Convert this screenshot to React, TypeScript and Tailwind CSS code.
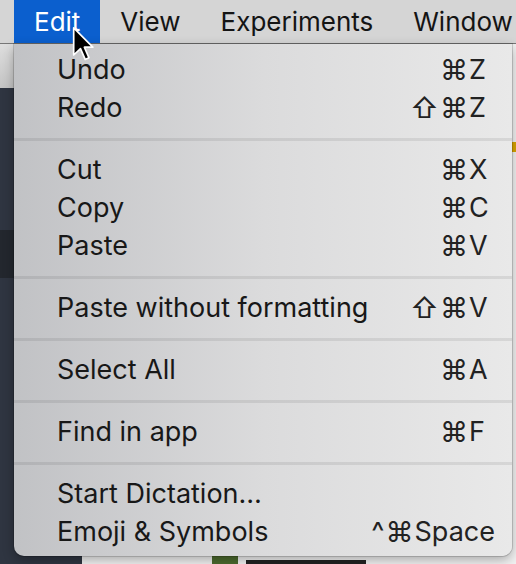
import React from 'react';

type Item = { label: string; mods?: string; keyName?: string; wide?: boolean };

const groups: Item[][] = [
  [
    { label: 'Undo', mods: '⌘', keyName: 'Z' },
    { label: 'Redo', mods: '⇧⌘', keyName: 'Z' },
  ],
  [
    { label: 'Cut', mods: '⌘', keyName: 'X' },
    { label: 'Copy', mods: '⌘', keyName: 'C' },
    { label: 'Paste', mods: '⌘', keyName: 'V' },
  ],
  [{ label: 'Paste without formatting', mods: '⇧⌘', keyName: 'V' }],
  [{ label: 'Select All', mods: '⌘', keyName: 'A' }],
  [{ label: 'Find in app', mods: '⌘', keyName: 'F' }],
  [
    { label: 'Start Dictation…' },
    { label: 'Emoji & Symbols', mods: '^⌘', keyName: 'Space', wide: true },
  ],
];

const topMenus = ['Edit', 'View', 'Experiments', 'Window'];

function Cursor() {
  return (
    <svg
      className="absolute left-[72px] top-[26px] z-30"
      width="22"
      height="36"
      viewBox="-1 -1 13 21"
    >
      <path
        d="M0 0 L0 16 L4 12.2 L6.8 18.6 L9 17.6 L6.3 11.4 L11.3 11.4 Z"
        fill="#000"
        stroke="#fff"
        strokeWidth="1"
        strokeLinejoin="round"
      />
    </svg>
  );
}

function MenuRow({ item }: { item: Item }) {
  return (
    <div className="flex h-[38px] items-center pl-[43px] pr-[25px]">
      <span className="flex-1 whitespace-nowrap text-[#181818]">{item.label}</span>
      {item.keyName && (
        <span className={`flex items-center whitespace-nowrap text-[#222] ${item.wide ? '-mr-[8px]' : ''}`}>
          <span className="text-right text-[28px] leading-none tracking-[1px]">{item.mods}</span>
          <span className={item.wide ? '' : 'w-[18px]'}>{item.keyName}</span>
        </span>
      )}
    </div>
  );
}

export default function App() {
  return (
    <div
      className="relative h-[564px] w-[516px] overflow-hidden bg-[#2e3440] text-[27px]"
      style={{ fontFamily: 'Inter, "Noto Sans", sans-serif' }}
    >
      {/* menu bar */}
      <div className="flex h-[44px] items-stretch overflow-hidden border-b border-[#777] bg-[#d5d5d5] pl-[14px] text-[26px] text-[#141414]">
        {topMenus.map((m, i) => (
          <div
            key={m}
            className={`flex shrink-0 items-center px-[20px] ${i === 0 ? 'bg-[#0b5fce] text-white' : ''}`}
          >
            {m}
          </div>
        ))}
      </div>

      {/* window content behind the menu */}
      <div className="flex h-[520px]">
        <div className="flex w-[82px] flex-col">
          <div className="h-[44px] bg-gradient-to-b from-[#dedede] to-[#c4c4c4]" />
          <div className="h-[142px] bg-[#2f3541]" />
          <div className="h-[48px] bg-[#23272e]" />
          <div className="flex-1 bg-[#2f3541]" />
        </div>
        <div className="flex flex-1 flex-col bg-[#f1f1f1]">
          <div className="h-[98px]" />
          <div className="ml-auto h-[10px] w-[4px] bg-[#d9a400]" />
          <div className="flex-1" />
          <div className="flex h-[10px] items-end gap-[8px] pl-[130px]">
            <div className="h-[10px] w-[26px] bg-[#4c6a2e]" />
            <div className="h-[4px] w-[120px] bg-[#222]" />
          </div>
        </div>
      </div>

      {/* Edit dropdown */}
      <div className="absolute left-[14px] top-[44px] z-20 w-[498px] rounded-b-[10px] bg-gradient-to-r from-[#c1c2c5] via-[#dbdbdc] to-[#e9e9e9] pb-[5px] pt-[7px] shadow-[0_4px_12px_rgba(0,0,0,0.3)] ring-1 ring-black/15">
        {groups.map((g, gi) => (
          <div key={gi}>
            {gi > 0 && (
              <div className="flex h-[24px] items-center">
                <div className="h-[3px] w-full bg-black/[0.08]" />
              </div>
            )}
            {g.map((it) => (
              <MenuRow key={it.label} item={it} />
            ))}
          </div>
        ))}
      </div>

      <Cursor />
    </div>
  );
}
